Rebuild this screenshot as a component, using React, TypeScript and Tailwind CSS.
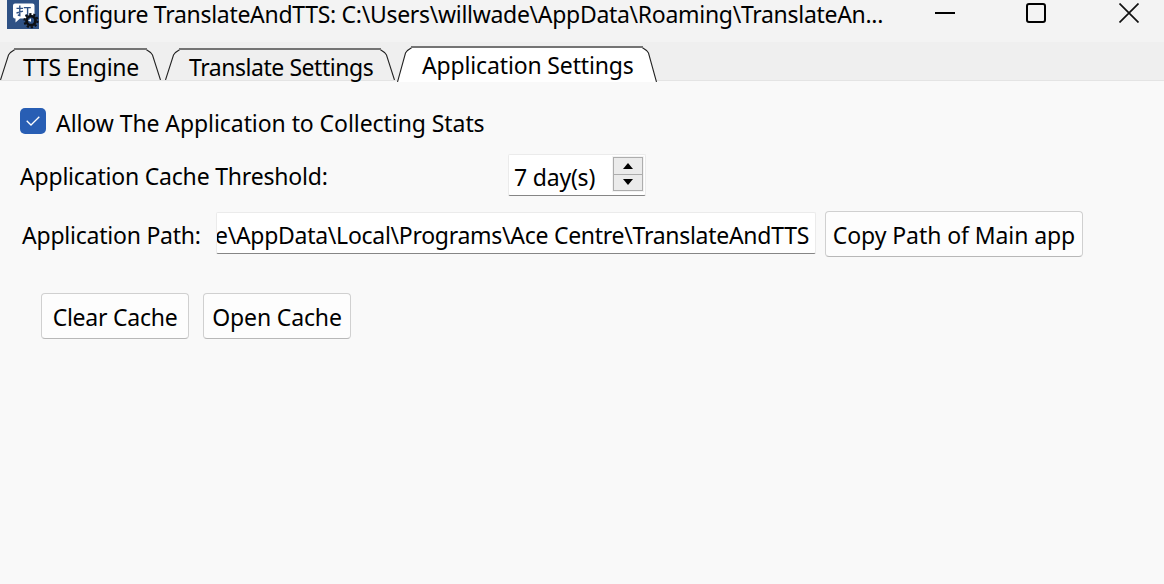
import React from "react";

type TabProps = {
  label: string;
  width: string;
  textClass: string;
  active?: boolean;
  viewWidth: number;
};

function Tab({ label, width, textClass, active, viewWidth: w }: TabProps) {
  const h = active ? 36 : 32;
  const outline = `M0.5 ${h} L8.5 7 L10.5 4.5 L15.5 1 H${w - 15.5} L${w - 10.5} 4.5 L${w - 8.5} 7 L${w - 0.5} ${h}`;
  return (
    <button
      role="tab"
      aria-selected={!!active}
      className={`relative flex shrink-0 items-start text-left ${active ? "h-9" : "h-8"} ${width}`}
    >
      <svg className="absolute inset-0" width={w} height={h} viewBox={`0 0 ${w} ${h}`}>
        <path d={outline} fill={active ? "#ffffff" : "#efefef"} stroke="#222" strokeWidth="1.1" />
        <path d={`M14 1 H${w - 14}`} stroke="#747474" strokeWidth="2" />
      </svg>
      <span className={`relative block ${textClass}`}>{label}</span>
    </button>
  );
}

function AppIcon() {
  return (
    <svg width="32" height="29" viewBox="0 0 32 29" className="shrink-0">
      <rect width="32" height="29" fill="#2e5185" />
      <path d="M8 3.5h17.5a2 2 0 0 1 2 2v11a2 2 0 0 1-2 2H13l-4.5 4v-4H8a2 2 0 0 1-2-2v-11a2 2 0 0 1 2-2z" fill="#fff" />
      <path d="M9.5 8.4h6.5M9.5 13l6.5-1.8M12.8 5.5v10l-2-.5M16.8 7.6h7M20.6 7.6v7.6h-2.4" fill="none" stroke="#2e5185" strokeWidth="1.4" />
      <circle cx="24" cy="20.7" r="6.6" fill="none" stroke="#0c0f14" strokeWidth="2" strokeDasharray="2.3 1.847" />
      <circle cx="24" cy="20.7" r="4.5" fill="#2e5185" stroke="#0c0f14" strokeWidth="2.8" />
      <path d="M21 20.7l3-2.4v3.4z" fill="#fff" />
    </svg>
  );
}

export default function App() {
  return (
    <div className="flex h-[584px] w-[1164px] flex-col overflow-hidden whitespace-nowrap bg-[#f9f9f9] font-['Noto_Sans',sans-serif] text-[23px] leading-[30px] text-black">
      <header className="flex h-[42px] shrink-0 items-start bg-[#f3f3f3]">
        <div className="ml-[7px] h-[29px] w-8"><AppIcon /></div>
        <h1 className="ml-[5px] w-[850px] leading-7"><span className="block tracking-[-0.3px]">Configure TranslateAndTTS: C:\Users\willwade\AppData\Roaming\TranslateAn...</span></h1>
        <div className="ml-[41px] flex pt-[3px]">
          <button aria-label="Minimize">
            <svg width="20" height="20"><path d="M0 10h20" stroke="#000" strokeWidth="2" /></svg>
          </button>
          <button aria-label="Maximize" className="ml-[71px]">
            <svg width="20" height="20"><rect x="1" y="1" width="18" height="18" rx="2" fill="none" stroke="#000" strokeWidth="2" /></svg>
          </button>
          <button aria-label="Close" className="ml-[73px]">
            <svg width="20" height="20"><path d="M.5.5l19 19M19.5.5l-19 19" stroke="#111" strokeWidth="1.7" /></svg>
          </button>
        </div>
      </header>
      <nav role="tablist" className="flex h-[39px] shrink-0 items-end border-b border-[#e4e4e4] bg-[#efefef]">
        <Tab label="TTS Engine" width="w-[161px]" viewWidth={161} textClass="pl-[23px] pt-1 tracking-[-0.3px]" />
        <div className="w-1" />
        <Tab label="Translate Settings" width="w-[230px]" viewWidth={230} textClass="pl-6 pt-1 tracking-[-0.45px]" />
        <div className="w-[2px]" />
        <div className="relative -mb-[2px]">
          <Tab active label="Application Settings" width="w-[260px]" viewWidth={260} textClass="pl-[25px] pt-1 tracking-[-0.15px]" />
        </div>
      </nav>
      <main className="flex flex-col">
        <label className="mt-[27px] flex h-[30px] items-start">
          <span className="ml-5 flex h-[26px] w-[26px] items-center justify-center rounded-[5px] bg-[#285eb4]">
            <svg width="14" height="10" viewBox="0 0 14 10"><path d="M.7 4.8L5 9L13.3.8" fill="none" stroke="#fff" strokeWidth="1.3" /></svg>
          </span>
          <span className="ml-[10px] tracking-[-0.07px]">Allow The Application to Collecting Stats</span>
        </label>
        <div className="mt-4 flex h-[42px]">
          <span className="ml-5 w-[488px] pt-[7px]"><span className="tracking-[-0.2px]">Application Cache Threshold:</span></span>
          <div className="flex w-[138px] justify-between rounded-[2px] border border-[#ebebeb] border-b-[#868686] bg-white pl-[5px] pr-px pt-px">
            <span className="pt-[6px]"><span className="tracking-[-0.2px]">7 day(s)</span></span>
            <div className="flex h-[36px] w-8 flex-col border border-[#f3f3f3]">
              <button aria-label="Increase" className="flex h-[18px] items-center justify-center border border-[#adadad] bg-[#ebebeb]">
                <svg width="10" height="6"><path d="M0 6L5 0L10 6z" /></svg>
              </button>
              <button aria-label="Decrease" className="-mt-px flex h-[18px] items-center justify-center border border-[#adadad] bg-[#ebebeb]">
                <svg width="10" height="6"><path d="M0 0L5 6L10 0z" /></svg>
              </button>
            </div>
          </div>
        </div>
        <div className="mt-[15px] flex h-[46px]">
          <span className="ml-[22px] w-[194px] pt-[9px]"><span className="tracking-[-0.23px]">Application Path:</span></span>
          <div className="mt-px flex h-[42px] w-[600px] rounded-[2px] border border-[#ebebeb] border-b-[#868686] bg-white pr-[6px] pt-[7px]">
            <div className="flex w-full justify-end overflow-hidden"><span className="tracking-[-0.28px]">e\AppData\Local\Programs\Ace Centre\TranslateAndTTS</span></div>
          </div>
          <button className="ml-[9px] flex h-[46px] w-[258px] justify-center rounded border border-[#d0d0d0] border-b-[#b8b8b8] bg-[#fdfdfd] pt-2"><span className="tracking-[-0.08px]">Copy Path of Main app</span></button>
        </div>
        <div className="ml-[41px] mt-9 flex gap-[14px]">
          <button className="flex h-[46px] w-[148px] justify-center rounded border border-[#d0d0d0] border-b-[#b8b8b8] bg-[#fdfdfd] pt-2"><span className="tracking-[-0.25px]">Clear Cache</span></button>
          <button className="flex h-[46px] w-[148px] justify-center rounded border border-[#d0d0d0] border-b-[#b8b8b8] bg-[#fdfdfd] pt-2"><span className="tracking-[-0.15px]">Open Cache</span></button>
        </div>
      </main>
    </div>
  );
}
